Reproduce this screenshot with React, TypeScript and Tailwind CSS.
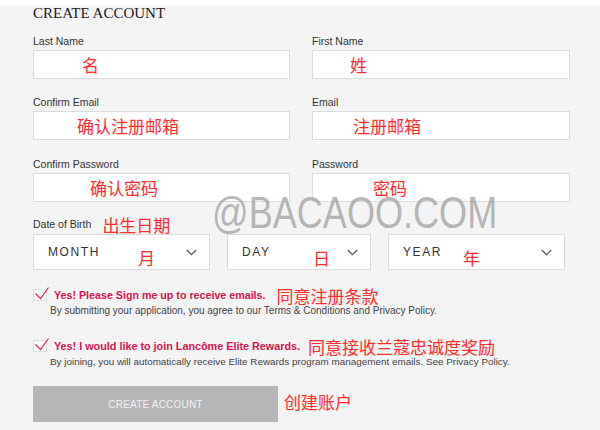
import React from "react";

const sans = { fontFamily: '"Liberation Sans", Arial, sans-serif' };
const cjk = "font-['Noto_Sans_CJK_SC',sans-serif] text-[17px] leading-none text-[#ff2d2d]";

function Field({ label, note, pl }: { label: string; note: string; pl: string }) {
  return (
    <div className="flex flex-col">
      <div className="h-[12px] text-[10.5px] leading-[12px] text-[#333]">{label}</div>
      <div className={`mt-[3px] flex h-[29px] items-center border border-[#dcdcdc] bg-white ${pl}`}>
        <span className={cjk}>{note}</span>
      </div>
    </div>
  );
}

function Chevron() {
  return (
    <svg width="11" height="7" viewBox="0 0 11 7" className="ml-auto">
      <path d="M0.8 1 L5.5 5.6 L10.2 1" fill="none" stroke="#555" strokeWidth="1.2" />
    </svg>
  );
}

function Select({ text, note, w }: { text: string; note: string; w: string }) {
  return (
    <div className="flex h-[36px] items-center border border-[#dcdcdc] bg-white pl-[14px] pr-[12px]">
      <span className={`${w} text-[12px] leading-none tracking-[1.6px] text-[#333]`}>{text}</span>
      <span className={`${cjk} translate-y-[5px]`}>{note}</span>
      <Chevron />
    </div>
  );
}

function Check() {
  return (
    <div className="relative h-[12px] w-[14px] border border-[#dcdcdc] bg-[#fafafa]">
      <svg width="18" height="16" viewBox="0 0 18 16" className="absolute left-[0px] top-[-4px] overflow-visible">
        <path d="M1.5 7.5 L6.5 12.5 L14.5 1.5" fill="none" stroke="#e0245e" strokeWidth="1.2" />
      </svg>
    </div>
  );
}

export default function App() {
  return (
    <div className="relative h-[430px] w-[600px] overflow-hidden bg-[#f4f4f4]" style={sans}>
      <div className="h-[5px] bg-white" />
      <div className="px-[33px]">
        <div className="mt-[1px] font-['Liberation_Serif',serif] text-[15px] leading-[15px] text-[#1a1a1a]">
          CREATE ACCOUNT
        </div>

        <div className="mt-[14px] grid grid-cols-[257px_258px] gap-x-[22px]">
          <Field label="Last Name" note="名" pl="pl-[48px]" />
          <Field label="First Name" note="姓" pl="pl-[37px]" />
        </div>
        <div className="mt-[17px] grid grid-cols-[257px_258px] gap-x-[22px]">
          <Field label="Confirm Email" note="确认注册邮箱" pl="pl-[43px]" />
          <Field label="Email" note="注册邮箱" pl="pl-[40px]" />
        </div>
        <div className="mt-[18px] grid grid-cols-[257px_258px] gap-x-[22px]">
          <Field label="Confirm Password" note="确认密码" pl="pl-[56px]" />
          <Field label="Password" note="密码" pl="pl-[60px]" />
        </div>

        <div className="mt-[16px] flex h-[12px] items-center">
          <span className="text-[10.5px] leading-[12px] text-[#333]">Date of Birth</span>
          <span className={`${cjk} ml-[11px]`}>出生日期</span>
        </div>
        <div className="mt-[4px] grid grid-cols-[177px_144px_177px] gap-x-[17px]">
          <Select text="MONTH" note="月" w="w-[90px]" />
          <Select text="DAY" note="日" w="w-[71px]" />
          <Select text="YEAR" note="年" w="w-[60px]" />
        </div>

        <div className="mt-[18px] flex h-[14px] items-center">
          <Check />
          <span className="ml-[7px] text-[10.7px] font-bold leading-none text-[#d3174f]">
            Yes! Please Sign me up to receive emails.
          </span>
          <span className={`${cjk} ml-[11px]`}>同意注册条款</span>
        </div>
        <div className="mt-[3px] pl-[17px] text-[10px] leading-[12px] text-[#444]">
          By submitting your application, you agree to our Terms &amp; Conditions and Privacy Policy.
        </div>

        <div className="mt-[22px] flex h-[14px] items-center">
          <Check />
          <span className="ml-[7px] text-[10.8px] font-bold leading-none text-[#d3174f]">
            Yes! I would like to join Lancôme Elite Rewards.
          </span>
          <span className={`${cjk} ml-[8px]`}>同意接收兰蔻忠诚度奖励</span>
        </div>
        <div className="mt-[3px] pl-[17px] text-[9.9px] leading-[12px] text-[#444]">
          By joining, you will automatically receive Elite Rewards program management emails. See Privacy Policy.
        </div>

        <div className="mt-[18px] flex items-center">
          <div className="flex h-[36px] w-[245px] items-center justify-center bg-[#b6b6b6] text-[10px] tracking-[0.2px] text-[#f2f2f2]">
            CREATE ACCOUNT
          </div>
          <span className={`${cjk} mb-[6px] ml-[6px]`}>创建账户</span>
        </div>
      </div>

      <div className="absolute left-[212px] top-[191px] origin-left scale-x-[0.82] whitespace-nowrap text-[44px] leading-[44px] text-[#999999]/70">
        @BACAOO.COM
      </div>
    </div>
  );
}
